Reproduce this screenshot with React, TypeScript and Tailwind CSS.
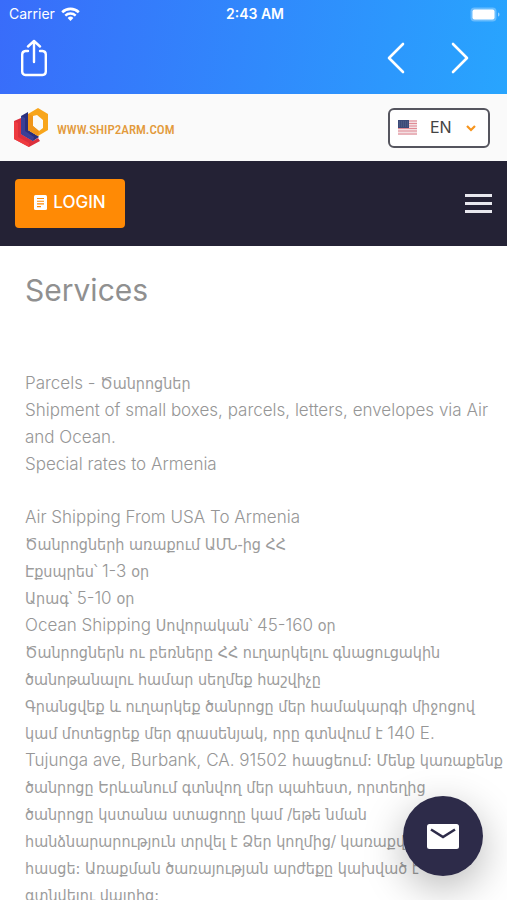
import React from "react";

type Run = { text: string; hy?: boolean };

const intro: Run[][] = [
  [{ text: "Parcels - " }, { text: "Ծանրոցներ", hy: true }],
  [{ text: "Shipment of small boxes, parcels, letters, envelopes via Air" }],
  [{ text: "and Ocean." }],
  [{ text: "Special rates to Armenia" }],
];

const details: Run[][] = [
  [{ text: "Air Shipping From USA To Armenia" }],
  [{ text: "Ծանրոցների առաքում ԱՄՆ-ից ՀՀ", hy: true }],
  [{ text: "Էքսպրես՝ ", hy: true }, { text: "1-3 " }, { text: "օր", hy: true }],
  [{ text: "Արագ՝ ", hy: true }, { text: "5-10 " }, { text: "օր", hy: true }],
  [
    { text: "Ocean Shipping " },
    { text: "Սովորական՝ ", hy: true },
    { text: "45-160 " },
    { text: "օր", hy: true },
  ],
  [{ text: "Ծանրոցներն ու բեռները ՀՀ ուղարկելու գնացուցակին", hy: true }],
  [{ text: "ծանոթանալու համար սեղմեք հաշվիչը", hy: true }],
  [{ text: "Գրանցվեք և ուղարկեք ծանրոցը մեր համակարգի միջոցով", hy: true }],
  [
    { text: "կամ մոտեցրեք մեր գրասենյակ, որը գտնվում է ", hy: true },
    { text: "140 E." },
  ],
  [
    { text: "Tujunga ave, Burbank, CA. 91502 " },
    { text: "հասցեում: Մենք կառաքենք", hy: true },
  ],
  [{ text: "ծանրոցը Երևանում գտնվող մեր պահեստ, որտեղից", hy: true }],
  [{ text: "ծանրոցը կստանա ստացողը կամ /եթե նման", hy: true }],
  [{ text: "հանձնարարություն տրվել է Ձեր կողմից/ կառաքվի", hy: true }],
  [{ text: "հասցե: Առաքման ծառայության արժեքը կախված է", hy: true }],
  [{ text: "գտնվելու վայրից:", hy: true }],
];

function Lines({ lines }: { lines: Run[][] }) {
  return (
    <p className="text-[17px] leading-[27px] font-light whitespace-nowrap text-[#969696]">
      {lines.map((line, i) => (
        <span key={i} className="block h-[27px]">
          {line.map((run, j) =>
            run.hy ? (
              <span key={j} lang="hy" className="font-['DejaVu_Sans_Condensed','DejaVu_Sans',sans-serif] text-base font-normal text-[#9c9c9c]">
                {run.text}
              </span>
            ) : (
              <span key={j}>{run.text}</span>
            ),
          )}
        </span>
      ))}
    </p>
  );
}

function StatusBar() {
  return (
    <div className="grid h-7 grid-cols-3 items-center pr-1.5 pl-[9px] text-sm">
      <div className="flex items-center gap-1.5">
        <span>Carrier</span>
        <svg width="19" height="15" viewBox="0 0 19 15" fill="none" stroke="white" aria-label="Wi-Fi">
          <path d="M1.2 5.2a12 12 0 0 1 16.6 0" strokeWidth="2.6" />
          <path d="M4.3 8.6a7.6 7.6 0 0 1 10.4 0" strokeWidth="2.4" />
          <path d="M9.5 14 6.6 11a4.2 4.2 0 0 1 5.8 0z" fill="white" stroke="none" />
        </svg>
      </div>
      <span className="text-center font-semibold">2:43 AM</span>
      <svg className="justify-self-end" width="31" height="15" viewBox="0 0 31 15" aria-label="Battery">
        <rect x="0.5" y="0.5" width="26" height="14" rx="4" fill="white" fillOpacity="0.3" />
        <rect x="2.5" y="2.5" width="22" height="10" rx="2" fill="white" />
        <path d="M28 5.500c2 .5 2 3.500 0 4z" fill="white" fillOpacity="0.5" />
      </svg>
    </div>
  );
}

function Logo() {
  return (
    <svg width="34" height="40" viewBox="0 0 34 40" aria-hidden="true">
      <path d="M0 13 7 10v16l12 7 5-3 2 3-11 6L0 31z" fill="#dc2f3c" />
      <path d="M0 13 4 15v14l11 6v4L0 31z" fill="#ee3a3f" />
      <path d="M7 8l7-4v18l10 6 1 1-6 4L7 26z" fill="#2b2f7c" />
      <path d="M7 8l4 2v13l9 6-1 4L7 26z" fill="#3a3f96" />
      <path fillRule="evenodd" d="M24 0 34 6v16l-10 6-10-6V6zM19 8v10l6 5 4-3v-8l-6-5z" fill="#f8a51b" />
      <path d="m14 6 5 2v10l6 5-1 5-10-6z" fill="#ef951b" />
    </svg>
  );
}

function Flag() {
  return (
    <svg width="19" height="15" viewBox="0 0 19 15" aria-hidden="true">
      <rect width="19" height="15" fill="#f3dfe2" />
      <path d="M0 1h19M0 3.500h19M0 6h19M0 8.500h19M0 11h19M0 14h19" stroke="#e08a94" strokeWidth="1.200" />
      <rect width="11" height="8" fill="#3b4a78" />
      <path d="M1 2h9M1 4h9M1 6h9" stroke="#6d789e" strokeWidth="0.600" strokeDasharray="1 1" />
    </svg>
  );
}

export default function App() {
  return (
    <div className="overflow-x-hidden bg-white font-['Inter','Liberation_Sans',sans-serif]">
      <div className="bg-linear-[100deg] from-[#396cfa] to-[#28a5fe] text-white">
        <StatusBar />
        <div className="flex h-[66px] items-center justify-between pr-[38px] pb-1.5 pl-[21px]">
          <button type="button" aria-label="Share">
            <svg width="26" height="38" viewBox="0 0 26 38" fill="none" stroke="white" strokeWidth="2.400" strokeLinecap="round" strokeLinejoin="round">
              <path d="M7 12H4.500A3.500 3.500 0 0 0 1.200 15.500v17A3.500 3.500 0 0 0 4.500 36h17a3.500 3.500 0 0 0 3.300-3.500v-17A3.500 3.500 0 0 0 21.500 12H19M13 23V2M7 7.500l6-5.500 6 5.500" />
            </svg>
          </button>
          <div className="flex gap-[46px]">
            <button type="button" aria-label="Back">
              <svg width="18" height="32" viewBox="0 0 18 32" fill="none" stroke="white" strokeWidth="2.600" strokeLinecap="round" strokeLinejoin="round">
                <path d="M16 2 2 16 16 30" />
              </svg>
            </button>
            <button type="button" aria-label="Forward">
              <svg width="18" height="32" viewBox="0 0 18 32" fill="none" stroke="white" strokeWidth="2.600" strokeLinecap="round" strokeLinejoin="round">
                <path d="M2 2 16 16 2 30" />
              </svg>
            </button>
          </div>
        </div>
      </div>

      <header>
        <div className="flex h-[67px] items-center justify-between bg-[#fafafa] pr-[17px] pl-[14px]">
          <a href="#" className="flex items-center gap-[9px]">
            <Logo />
            <span className="pt-1 font-['Roboto_Condensed','DejaVu_Sans_Condensed',sans-serif] text-[13px] font-medium text-[#e39a3c]">
              WWW.SHIP2ARM.COM
            </span>
          </a>
          <div className="relative flex h-10 w-[102px] items-center rounded-md border-2 border-[#55555e] bg-white pl-2">
            <Flag />
            <select
              aria-label="Language"
              defaultValue="EN"
              className="absolute inset-0 appearance-none bg-transparent pb-0.5 pl-10 text-base text-[#444444] outline-none"
            >
              <option>EN</option>
              <option>HY</option>
            </select>
            <svg className="pointer-events-none absolute right-3 top-[15px]" width="10" height="7" viewBox="0 0 10 7" fill="none" stroke="#f7941d" strokeWidth="2.200" aria-hidden="true">
              <path d="m1 1 4 4 4-4" />
            </svg>
          </div>
        </div>
        <nav className="flex h-[85px] items-center justify-between bg-[#242235] pr-[15px] pl-[15px]">
          <button type="button" className="flex h-[49px] w-[110px] items-center justify-center gap-1.5 rounded bg-[#ff8a05] pb-0.5 text-[17px] font-medium text-white">
            <svg width="13" height="15" viewBox="0 0 13 15" aria-hidden="true">
              <rect width="13" height="15" rx="1.500" fill="white" />
              <path d="M3 3.500h7M3 6.200h7M3 8.900h7M3 11.600h4" stroke="#ff8a05" strokeWidth="1.100" />
            </svg>
            LOGIN
          </button>
          <button type="button" aria-label="Menu" className="flex w-[27px] flex-col gap-[5px]">
            <span className="h-[3px] bg-[#e8e8ee]" />
            <span className="h-[3px] bg-[#e8e8ee]" />
            <span className="h-[3px] bg-[#e8e8ee]" />
          </button>
        </nav>
      </header>

      <main className="px-[25px] pt-6">
        <h1 className="text-[30px] leading-10 text-[#909090]">Services</h1>
        <div className="flex flex-col gap-[26px] pt-[60px]">
          <Lines lines={intro} />
          <Lines lines={details} />
        </div>
      </main>

      <button
        type="button"
        aria-label="Send a message"
        className="fixed right-6 bottom-6 flex size-20 items-center justify-center rounded-full bg-[#2d2b49] shadow-[0_12px_40px_rgba(0,0,0,0.28)]"
      >
        <svg width="32" height="25" viewBox="0 0 32 25" aria-hidden="true">
          <rect width="32" height="25" rx="2.500" fill="white" />
          <path d="m4 5.500 12 7.500 12-7.500" fill="none" stroke="#2d2b49" strokeWidth="2.600" />
        </svg>
      </button>
    </div>
  );
}
